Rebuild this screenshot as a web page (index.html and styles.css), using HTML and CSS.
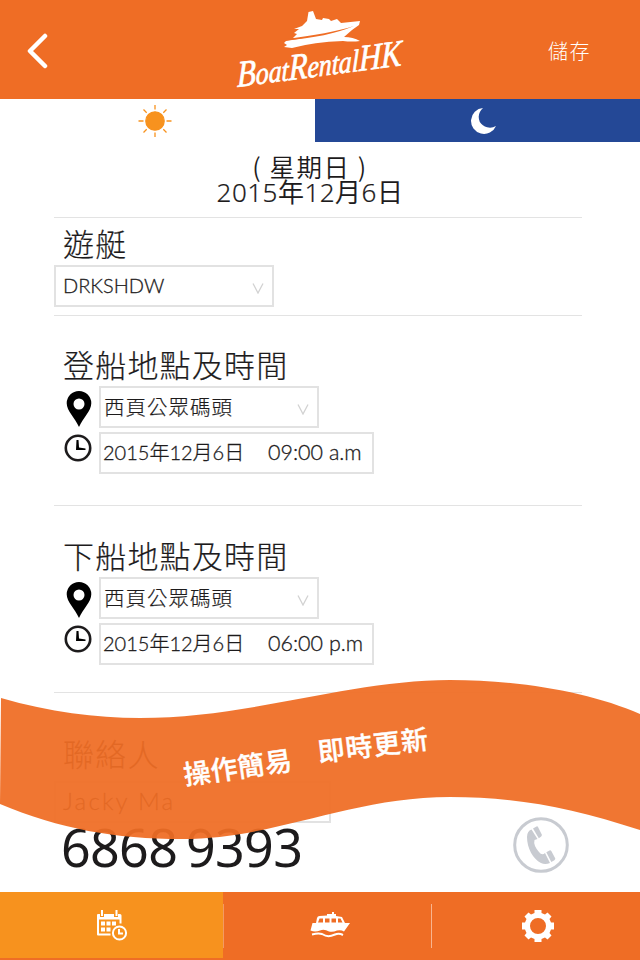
FILE: index.html
```html
<!DOCTYPE html>
<html lang="zh-Hant">
<head>
    <meta charset="UTF-8">
    <meta name="viewport" content="width=device-width, initial-scale=1.0">
    <title>Boat Rental HK</title>
    <link rel="stylesheet" href="styles.css">
</head>
<body>

    <header>
        <a class="back" href="#" aria-label="Back">
            <svg width="22" height="38" viewBox="0 0 22 38"><path d="M19 4 4 19 19 34"/></svg>
        </a>
        <svg class="logo" width="180" height="90" viewBox="230 5 180 90">
            <path d="M308.500 12 313 11 316 19 322 20 323 18 329 19 331 21 337 19 341 23 360 21 359 25 352 30 344 37Q353 37 360 41 352 42 343 41 314 42 292 48L284 47 287 45 284 43 286 41 304 38 293 38 297 34 294 33 299 29 294 29 302 26 307 21Z"/>
            <path class="stripe" d="M285 40.500Q328 37 354 26Q329 34 285 39Z"/>
            <g transform="translate(237 87) rotate(-7.500) skewX(-8)">
                <text class="logo-text" textLength="166" lengthAdjust="spacingAndGlyphs"><tspan class="cap">B</tspan>oat<tspan class="cap">R</tspan>ental<tspan class="cap">HK</tspan></text>
            </g>
        </svg>
        <a class="save" href="#">儲存</a>
    </header>

    <div class="tabs">
        <a class="day" href="#" aria-label="Day">
            <svg width="34" height="34" viewBox="-17 -17 34 34">
                <circle r="9.200"/>
                <path d="M0-11.500V-16M0 11.500V16M-11.500 0H-16.500M11.500 0H16.500M-8.300-8.300-11.500-11.500M8.300-8.300 11.500-11.500M-8.300 8.300-11.500 11.500M8.300 8.300 11.500 11.500"/>
            </svg>
        </a>
        <a class="night" href="#" aria-label="Night">
            <svg width="26" height="28" viewBox="0 0 26 28"><path d="M12 1A13 13 0 1 0 25 19A12 12 0 0 1 8.800 15Q5.500 7 12 1Z"/></svg>
        </a>
    </div>

    <main>
        <div class="date">
            <p class="weekday">( 星期日 )</p>
            <p class="full-date">2015年12月6日</p>
        </div>

        <section class="boat">
            <h2>遊艇</h2>
            <div class="box select">
                <span class="latin">DRKSHDW</span>
                <svg class="arrow" width="12" height="11" viewBox="0 0 12 11"><path d="M1 .5 6 10 11 .5"/></svg>
            </div>
        </section>

        <section class="trip">
            <h2>登船地點及時間</h2>
            <div class="row">
                <svg class="pin" width="26" height="36" viewBox="0 0 26 36"><path d="M13 0A12.300 12.300 0 0 0 .7 12.300C.7 20 9 27 13 36 17 27 25.300 20 25.300 12.300A12.300 12.300 0 0 0 13 0ZM13 7.500A5.500 5.500 0 1 1 13 18.500 5.500 5.500 0 0 1 13 7.500Z"/></svg>
                <div class="box select">
                    <span class="place">西頁公眾碼頭</span>
                    <svg class="arrow" width="12" height="11" viewBox="0 0 12 11"><path d="M1 .5 6 10 11 .5"/></svg>
                </div>
            </div>
            <div class="row">
                <svg class="clock" width="28" height="28" viewBox="0 0 28 28"><circle cx="14" cy="14" r="12.200"/><path d="M12.500 6H14.500L15 13.500 21.500 14.500V16H12Z"/></svg>
                <div class="box time">
                    <span class="day-text">2015年12月6日</span>
                    <span class="hour">09:00 a.m</span>
                </div>
            </div>
        </section>

        <section class="trip leave">
            <h2>下船地點及時間</h2>
            <div class="row">
                <svg class="pin" width="26" height="36" viewBox="0 0 26 36"><path d="M13 0A12.300 12.300 0 0 0 .7 12.300C.7 20 9 27 13 36 17 27 25.300 20 25.300 12.300A12.300 12.300 0 0 0 13 0ZM13 7.500A5.500 5.500 0 1 1 13 18.500 5.500 5.500 0 0 1 13 7.500Z"/></svg>
                <div class="box select">
                    <span class="place">西頁公眾碼頭</span>
                    <svg class="arrow" width="12" height="11" viewBox="0 0 12 11"><path d="M1 .5 6 10 11 .5"/></svg>
                </div>
            </div>
            <div class="row">
                <svg class="clock" width="28" height="28" viewBox="0 0 28 28"><circle cx="14" cy="14" r="12.200"/><path d="M12.500 6H14.500L15 13.500 21.500 14.500V16H12Z"/></svg>
                <div class="box time">
                    <span class="day-text">2015年12月6日</span>
                    <span class="hour">06:00 p.m</span>
                </div>
            </div>
        </section>

        <section class="contact">
            <h2>聯絡人</h2>
            <div class="box name"><span class="latin">Jacky Ma</span></div>
            <div class="call">
                <p class="phone">6868 9393</p>
                <svg width="56" height="56" viewBox="0 0 56 56">
                    <circle cx="28" cy="28" r="26.300"/>
                    <path d="M18.500 12.500Q14 14 14 20C14 31 20 42 28 46Q32 48 37 46L32 36Q29 39 26 35 20 28 21.500 23L24.500 22ZM20 11.500 23.500 9.500Q24.500 9 25 10L29 18Q29 19.500 25.800 21.300ZM33.300 35.200 36.500 33.500Q37.500 33 38.300 34L42.300 41.500Q42.500 43 38.300 45Z"/>
                </svg>
            </div>
        </section>
    </main>

    <!-- Banner over the contact section -->
    <div class="banner">
        <svg width="640" height="170" viewBox="0 675 640 170">
            <path d="M1 698C50 712 95 718 140 718C250 718 350 680 450 680C520 680 590 692 640 714V830C570 807 515 797 450 797C350 797 275 839 182 839C115 839 60 829 0 804Z"/>
            <text textLength="109" transform="translate(185 785) rotate(-8)">操作簡易</text>
            <text textLength="111" transform="translate(319 762) rotate(-7)">即時更新</text>
        </svg>
    </div>

    <footer>
        <a class="active" href="#" aria-label="Bookings">
            <svg width="32" height="32" viewBox="0 0 32 32">
                <path fill-rule="evenodd" d="M1 4H3V7H7V4H17V7H21V4H23Q24.500 4 24.500 5.500V13.500H22.500V9.500H2V23.500H13.500V25.500H1Q0 25.500 0 24.500V5Q0 4 1 4ZM4 0H6V6H4ZM18.500 0H20.500V6H18.500ZM4 11.500H8V15.500H4ZM9.500 11.500H13.500V15.500H9.500ZM15 11.500H19V15.500H15ZM4 17.500H8V21.500H4ZM9.500 17.500H13.500V21.500H9.500Z"/>
                <circle class="line" cx="22.500" cy="23" r="6.600"/>
                <path class="line" d="M22 19V23.500H26"/>
            </svg>
        </a>
        <a href="#" aria-label="Boats">
            <svg width="40" height="26" viewBox="0 0 40 26">
                <path fill-rule="evenodd" d="M7 6Q7.500 4 9.500 4L17 3.500V2H22V0H24V2H26V4L32 5 35 11H40L34 19.500Q31 17.500 27 18.500 23 20.500 19 19.500 14 16.500 10 18.500 5 20.500 .5 18.500L2.500 11H6ZM9.500 6.500 8 10.500H13V6.500ZM15 6.500V10.500H19.500V6.500ZM21.500 6.500V10.500H26V6.500ZM28 6.500V10.500H32.500L30.500 6.500Z"/>
                <path class="line" d="M2 22.500Q8 21 12 22C17 25 20 24.500 25 22.500Q29 21 33 23"/>
            </svg>
        </a>
        <a href="#" aria-label="Settings">
            <svg width="34" height="34" viewBox="-17 -17 34 34">
                <path fill-rule="evenodd" d="M-3.500-16H3.500V-13L7-11.500 9.500-13.500 13.500-9.500 11.500-7 13-3.500H16V3.500H13L11.500 7 13.500 9.500 9.500 13.500 7 11.500 3.500 13V16H-3.500V13L-7 11.500-9.500 13.500-13.500 9.500-11.500 7-13 3.500H-16V-3.500H-13L-11.500-7-13.500-9.500-9.500-13.500-7-11.500-3.500-13ZM0-8A8 8 0 1 0 0 8 8 8 0 1 0 0-8Z"/>
            </svg>
        </a>
    </footer>

</body>
</html>
```
FILE: styles.css
```css
/* Global Reset and Box Sizing */
* {
    padding: 0;
    margin: 0;
    box-sizing: border-box;
}

body {
    position: relative;
    width: 640px;
    height: 960px;
    overflow: hidden;
    display: flex;
    flex-direction: column;
    background-color: #fff;
    color: #1d1b1c;
    font-family: "Noto Sans CJK TC", sans-serif;
    font-weight: 300;
}

a {
    color: #fff;
    text-decoration: none;
}

svg {
    display: block;
    flex: none;
}

/* Header Styling */
header {
    display: flex;
    height: 99px;
    padding: 5px 0 0 26px;
    background-color: #ef6d25;
}

.back {
    width: 66px;
    padding-top: 27px;
}

.back path {
    fill: none;
    stroke: #fff;
    stroke-width: 4.5;
    stroke-linecap: round;
    stroke-linejoin: round;
}

.logo {
    margin-left: 138px;
    fill: #fff;
}

.logo .stripe {
    fill: #ef6d25;
}

.logo-text {
    font: italic 31px "Liberation Serif", serif;
    stroke: #fff;
    stroke-width: 0.7;
}

.logo-text .cap {
    font-size: 37px;
}

.save {
    margin-left: 138px;
    padding-top: 31px;
    font-size: 20px;
    line-height: 30px;
    letter-spacing: 1.5px;
}

/* Day and night tabs */
.tabs {
    display: flex;
    height: 43px;
}

.day {
    width: 315px;
    padding: 5px 0 0 138px;
}

.day svg {
    fill: #f7921e;
    stroke: #f7921e;
    stroke-width: 1.3;
}

.night {
    flex: 1;
    padding: 8px 0 0 156px;
    background-color: #244896;
}

.night svg {
    fill: #fff;
}

/* Booking form */
main {
    height: 750px;
    padding: 0 58px 0 54px;
}

.date {
    height: 76px;
    padding: 10px 16px 0 0;
    border-bottom: 1px solid #e3e3e3;
    font-size: 26px;
    line-height: 27px;
    text-align: center;
}

.weekday {
    font-size: 25.5px;
    font-weight: 350;
    letter-spacing: 1.5px;
}

.full-date {
    font-family: "Noto Sans", "Noto Sans CJK TC", sans-serif;
    font-weight: 350;
    letter-spacing: 0.5px;
    -webkit-text-stroke: 0.2px;
}

h2 {
    padding-left: 9px;
    font-size: 31px;
    line-height: 40px;
    font-weight: 300;
    letter-spacing: 1.2px;
    -webkit-text-stroke: 0.2px;
}

.boat {
    height: 98px;
    padding-top: 5px;
    border-bottom: 1px solid #e3e3e3;
}

.boat .box {
    margin-top: 2px;
}

.trip {
    height: 190px;
    padding-top: 28px;
    border-bottom: 1px solid #e3e3e3;
}

.leave {
    height: 187px;
    padding-top: 29px;
}

.row {
    display: flex;
    height: 42px;
    margin-bottom: 4px;
}

h2 + .row {
    margin-top: 2px;
}

.box {
    display: flex;
    height: 42px;
    border: 2px solid #e2e2e2;
    font-size: 20px;
    line-height: 36px;
    white-space: nowrap;
}

.select {
    width: 220px;
    justify-content: space-between;
    padding: 0 8px 0 3px;
}

.boat .select {
    padding-left: 7px;
}

.arrow {
    margin-top: 16px;
    fill: none;
    stroke: #d2d2d2;
    stroke-width: 1.3;
}

.latin,
.hour,
.day-text {
    font-family: Lato, "Noto Sans CJK TC", sans-serif;
    -webkit-text-stroke: 0.3px;
}

.place {
    font-size: 20.5px;
    letter-spacing: 1px;
    -webkit-text-stroke: 0.2px;
}

.pin {
    margin: 5px 7px 0 12px;
}

.clock {
    margin: 2px 7px 0 10px;
}

.clock circle {
    fill: none;
    stroke: #1d1b1c;
    stroke-width: 2.6;
}

.time {
    width: 275px;
    padding-left: 2px;
}

.day-text {
    width: 165px;
}

.hour {
    font-size: 21.5px;
}

/* Contact */
.contact {
    padding-top: 40px;
}

.name {
    width: 277px;
    margin-top: 8px;
    padding-left: 7px;
}

.name .latin {
    font-size: 24px;
    letter-spacing: 2.2px;
}

.call {
    display: flex;
    justify-content: space-between;
    margin-top: -6px;
    padding: 0 13px 0 7px;
}

.phone {
    font-family: "Noto Sans", sans-serif;
    font-size: 52px;
    font-weight: 400;
    line-height: 60px;
    letter-spacing: -0.7px;
    word-spacing: -4px;
}

.call circle {
    fill: none;
    stroke: #c8cbd1;
    stroke-width: 3;
}

.call path {
    fill: #c8cbd1;
}

.banner {
    position: absolute;
    top: 675px;
    left: 0;
}

.banner path {
    fill: #ef6d25;
    opacity: 0.94;
}

.banner text {
    fill: #fff;
    font-size: 27px;
    font-weight: 500;
    stroke: #fff;
    stroke-width: 0.4;
}

/* Bottom navigation */
footer {
    display: flex;
    height: 68px;
    background-color: #ef6d25;
    fill: #fff;
}

footer a {
    position: relative;
    padding: 20px 0 0 87px;
    width: 208px;
}

footer a.active {
    width: 223px;
    height: 66px;
    padding: 18px 0 0 97px;
    background-color: #f7921e;
}

footer a:last-child {
    padding: 17px 0 0 90px;
    width: 209px;
}

footer a + a::before {
    content: "";
    position: absolute;
    left: 0;
    top: 12px;
    width: 1px;
    height: 44px;
    background-color: #f8b58f;
}

footer .active + a::before {
    background-color: #f39a62;
}

footer .line {
    fill: none;
    stroke: #fff;
    stroke-width: 2;
}
```
